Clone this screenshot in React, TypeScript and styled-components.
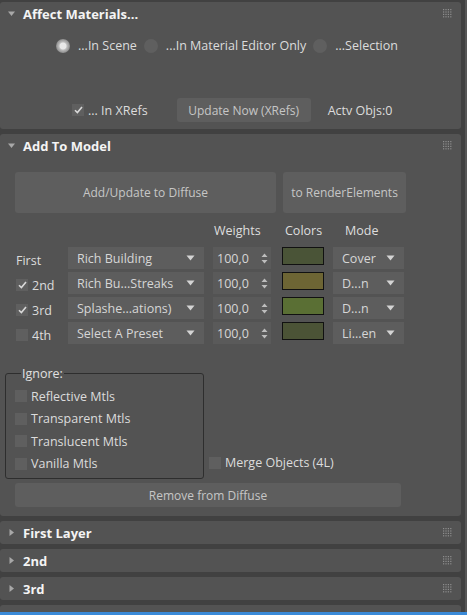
import styled, { createGlobalStyle } from 'styled-components';

const GlobalStyle = createGlobalStyle`
	html, body {
		margin: 0;
		padding: 0;
		background: #414141;
	}
	body {
		font-family: 'Open Sans', 'Noto Sans', sans-serif;
		font-size: 12.5px;
		color: #dcdcdc;
	}
`;

const LAYERS = [
	{ label: 'First', check: null, preset: 'Rich Building', weight: '100,0', color: '#4a5437', mode: 'Cover' },
	{ label: '2nd', check: true, preset: 'Rich Bu...Streaks', weight: '100,0', color: '#6d6534', mode: 'D...n' },
	{ label: '3rd', check: true, preset: 'Splashe...ations)', weight: '100,0', color: '#5a6f34', mode: 'D...n' },
	{ label: '4th', check: false, preset: 'Select A Preset', weight: '100,0', color: '#4b5336', mode: 'Li...en' },
];

const IGNORE = ['Reflective Mtls', 'Transparent Mtls', 'Translucent Mtls', 'Vanilla Mtls'];

const Page = styled.div`
	height: 615px;
	display: flex;
	flex-direction: column;
	overflow: hidden;
`;
const Body = styled.div`
	flex: 1;
	display: flex;
	overflow: hidden;
`;
const Rollouts = styled.div`
	width: 461px;
	padding-top: 2px;
	display: flex;
	flex-direction: column;
	gap: 5px;
`;
const Scrollbar = styled.div`
	width: 6px;
	display: flex;
	justify-content: flex-end;
	&::after {
		content: '';
		width: 2px;
		background: #565656;
	}
`;
const StatusLine = styled.div`
	height: 3px;
	background: #3a8ad8;
`;
const Panel = styled.section<{ $pad?: number }>`
	background: #535353;
	border-radius: 3px;
	padding-bottom: ${(p) => p.$pad ?? 0}px;
	flex-shrink: 0;
`;
const Header = styled.div`
	height: 23px;
	display: flex;
	align-items: center;
	padding: 0 9px 0 8px;
	font-weight: 700;
	font-size: 13px;
	color: #f4f4f4;
`;
const HeaderTitle = styled.span`
	flex: 1;
	margin-left: 8px;
`;

const Row = styled.div<{ $top: number; $left?: number; $center?: boolean }>`
	display: flex;
	align-items: center;
	margin-top: ${(p) => p.$top}px;
	padding-left: ${(p) => p.$left ?? 0}px;
	justify-content: ${(p) => (p.$center ? 'center' : 'flex-start')};
`;
const Option = styled.label`
	display: flex;
	align-items: center;
	gap: 8px;
	margin-right: 7px;
	white-space: nowrap;
`;
const Radio = styled.span<{ $on?: boolean }>`
	width: 14px;
	height: 14px;
	border-radius: 50%;
	flex-shrink: 0;
	background: ${(p) => (p.$on ? 'radial-gradient(circle, #e8e8e8 0 3px, #bdbdbd 4px, #8c8c8c 7px)' : '#5f5f5f')};
`;
const Check = styled.span`
	width: 12px;
	height: 12px;
	background: #5f5f5f;
	display: flex;
	align-items: center;
	justify-content: center;
	flex-shrink: 0;
`;
const CheckLabel = styled.label<{ $gap?: number }>`
	display: flex;
	align-items: center;
	gap: ${(p) => p.$gap ?? 4}px;
	white-space: nowrap;
`;
const Button = styled.button<{ $w: number; $h: number }>`
	display: block;
	width: ${(p) => p.$w}px;
	height: ${(p) => p.$h}px;
	background: #5e5e5e;
	border: none;
	border-radius: 3px;
	color: #c6c6c6;
	font-family: inherit;
	font-size: 12px;
	padding: 0;
	flex-shrink: 0;
`;
const Spaced = styled.div<{ $left: number }>`
	margin-left: ${(p) => p.$left}px;
	white-space: nowrap;
`;

const ButtonRow = styled.div`
	display: flex;
	gap: 7px;
	padding-left: 15px;
	margin-top: 15px;
`;
const Grid = styled.div`
	display: grid;
	grid-template-columns: 53px 145px 69px 51px 71px;
	row-gap: 3px;
	padding-left: 15px;
	margin-top: 9px;
`;
const ColHead = styled.div<{ $shift: number }>`
	padding-left: ${(p) => p.$shift}px;
	height: 17px;
	line-height: 17px;
	margin-bottom: 5px;
	color: #dedede;
`;
const LayerName = styled.div`
	display: flex;
	align-items: center;
	padding-top: 4px;
	padding-left: 1px;
`;
const Select = styled.div<{ $w: number }>`
	width: ${(p) => p.$w}px;
	height: 22px;
	background: #5d5d5d;
	display: flex;
	align-items: center;
	justify-content: space-between;
	padding: 0 9px 0 9px;
	box-sizing: border-box;
	color: #d6d6d6;
	white-space: nowrap;
`;
const Spinner = styled.div`
	width: 58px;
	height: 22px;
	background: #5a5a5a;
	display: flex;
	align-items: center;
	justify-content: space-between;
	padding: 0 3px 0 4px;
	box-sizing: border-box;
	color: #d6d6d6;
`;
const Swatch = styled.div`
	width: 42px;
	height: 18px;
	box-sizing: border-box;
	border: 1px solid #111;
`;

const LowerRow = styled.div`
	display: flex;
	align-items: flex-end;
	gap: 5px;
	margin-top: 22px;
	padding-left: 5px;
`;
const Group = styled.fieldset`
	width: 199px;
	box-sizing: border-box;
	margin: 0;
	padding: 4px 0 3px 9px;
	border: 1px solid #2e2e2e;
	border-radius: 3px;
	min-width: 0;
`;
const Legend = styled.legend`
	padding: 0 1px;
	margin-left: 6px;
	color: #e0e0e0;
	line-height: 15px;
`;
const GroupItem = styled(CheckLabel)`
	height: 22.5px;
`;
const MergeItem = styled(CheckLabel)`
	margin-bottom: 8px;
`;
const RemoveRow = styled.div`
	display: flex;
	padding-left: 15px;
	margin-top: 4px;
`;

function Triangle({ open }: { open?: boolean }) {
	return (
		<svg width="7" height="7" viewBox="0 0 7 7">
			<path d={open ? 'M0 1.5 H7 L3.5 6 Z' : 'M1.5 0 V7 L6 3.5 Z'} fill="#a8a8a8" />
		</svg>
	);
}

function Grip() {
	const dots = [];
	for (let r = 0; r < 4; r++) for (let c = 0; c < 4; c++) dots.push(<rect key={r * 4 + c} x={c * 2.4} y={r * 2.4} width="1.2" height="1.2" />);
	return (
		<svg width="9" height="9" viewBox="0 0 9 9" fill="#8e8e8e">
			{dots}
		</svg>
	);
}

function Tick({ on }: { on?: boolean | null }) {
	return (
		<Check>
			{on && (
				<svg width="9" height="8" viewBox="0 0 9 8">
					<path d="M1 4.2 L3.4 6.6 L8 1" stroke="#d8d8d8" strokeWidth="1.6" fill="none" />
				</svg>
			)}
		</Check>
	);
}

function DownArrow() {
	return (
		<svg width="9" height="6" viewBox="0 0 9 6">
			<path d="M0.5 0.5 H8.5 L4.5 5.5 Z" fill="#d4d4d4" />
		</svg>
	);
}

function SpinArrows() {
	return (
		<svg width="7" height="11" viewBox="0 0 7 11">
			<path d="M0.5 4 L3.5 0.5 L6.5 4 Z M0.5 7 L3.5 10.5 L6.5 7 Z" fill="#bdbdbd" />
		</svg>
	);
}

function RolloutHeader({ title, open }: { title?: string; open?: boolean }) {
	return (
		<Header>
			<Triangle open={open} />
			<HeaderTitle>{title}</HeaderTitle>
			<Grip />
		</Header>
	);
}

export default function App() {
	return (
		<Page>
			<GlobalStyle />
			<Body>
				<Rollouts>
					<Panel $pad={7}>
						<RolloutHeader title="Affect Materials..." open />
						<Row $top={12} $center>
							<Option>
								<Radio $on />
								...In Scene
							</Option>
							<Option>
								<Radio />
								...In Material Editor Only
							</Option>
							<Option>
								<Radio />
								...Selection
							</Option>
						</Row>
						<Row $top={44} $left={72}>
							<CheckLabel>
								<Tick on />
								... In XRefs
							</CheckLabel>
							<Spaced $left={29}>
								<Button $w={134} $h={24}>Update Now (XRefs)</Button>
							</Spaced>
							<Spaced $left={17}>Actv Objs:0</Spaced>
						</Row>
					</Panel>

					<Panel $pad={9}>
						<RolloutHeader title="Add To Model" open />
						<ButtonRow>
							<Button $w={261} $h={41}>Add/Update to Diffuse</Button>
							<Button $w={123} $h={41}>to RenderElements</Button>
						</ButtonRow>
						<Grid>
							<div />
							<div />
							<ColHead $shift={1}>Weights</ColHead>
							<ColHead $shift={3}>Colors</ColHead>
							<ColHead $shift={12}>Mode</ColHead>
							{LAYERS.map((l) => [
								<LayerName key={l.label + 'n'}>
									{l.check === null ? (
										l.label
									) : (
										<CheckLabel>
											<Tick on={l.check} />
											{l.label}
										</CheckLabel>
									)}
								</LayerName>,
								<Select $w={136} key={l.label + 'p'}>
									{l.preset}
									<DownArrow />
								</Select>,
								<Spinner key={l.label + 'w'}>
									{l.weight}
									<SpinArrows />
								</Spinner>,
								<div key={l.label + 'c'}>
									<Swatch style={{ background: l.color }} />
								</div>,
								<Select $w={71} key={l.label + 'm'}>
									{l.mode}
									<DownArrow />
								</Select>,
							])}
						</Grid>
						<LowerRow>
							<Group>
								<Legend>Ignore:</Legend>
								{IGNORE.map((name) => (
									<GroupItem key={name}>
										<Tick />
										{name}
									</GroupItem>
								))}
							</Group>
							<MergeItem>
								<Tick />
								Merge Objects (4L)
							</MergeItem>
						</LowerRow>
						<RemoveRow>
							<Button $w={386} $h={24}>Remove from Diffuse</Button>
						</RemoveRow>
					</Panel>

					<Panel>
						<RolloutHeader title="First Layer" />
					</Panel>
					<Panel>
						<RolloutHeader title="2nd" />
					</Panel>
					<Panel>
						<RolloutHeader title="3rd" />
					</Panel>
					<Panel>
						<RolloutHeader />
					</Panel>
				</Rollouts>
				<Scrollbar />
			</Body>
			<StatusLine />
		</Page>
	);
}
